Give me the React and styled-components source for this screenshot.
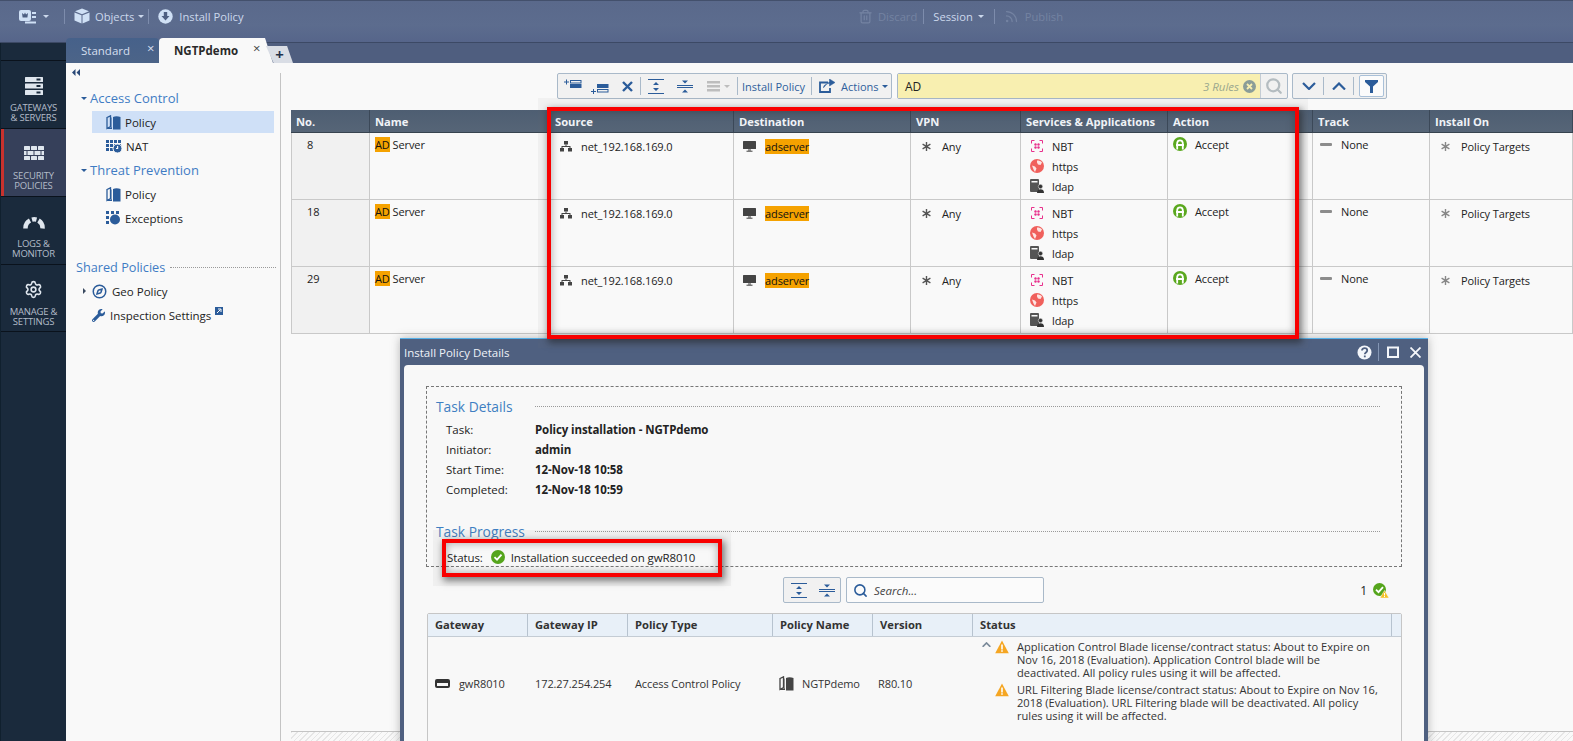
import styled, { createGlobalStyle } from "styled-components";
import { Compass, Rss, Settings, Search as SearchGlyph, Trash2 } from "lucide-react";
import { FaWrench } from "react-icons/fa";

const BLUE = "#2b5c9a";

const GlobalStyle = createGlobalStyle`
    html, body {
        margin: 0;
        height: 100%;
        overflow: hidden;
        background: #f9f9f9;
    }

    body {
        font-family: "Open Sans", "Liberation Sans", sans-serif;
        font-size: 11.5px;
        color: #222;
    }

    svg {
        display: block;
        flex-shrink: 0;
    }
`;

const Page = styled.div`
    position: relative;
    width: 1573px;
    height: 741px;
    overflow: hidden;
    display: flex;
    flex-direction: column;
`;

const TopBar = styled.header`
    flex: 0 0 43px;
    box-sizing: border-box;
    display: flex;
    align-items: flex-start;
    padding: 7px 0 0 19px;
    background: linear-gradient(#5a698b, #5c6c8e 60%, #56658a);
    border-top: 1px solid #43506c;
    border-bottom: 1px solid #3c4965;
`;

const BarGroup = styled.div`
    display: flex;
    align-items: center;
    height: 16px;
    width: ${props => props.$width ? `${props.$width}px` : "auto"};
`;

const BarText = styled.span`
    color: ${props => props.$dim ? "#7483a2" : "#cbd8ec"};
    font-size: 11.2px;
    margin-left: ${props => props.$left || 0}px;
    white-space: nowrap;
`;

const BarSep = styled.i`
    width: 1px;
    height: 15px;
    background: #7d8cac;
    margin: 0 9px 0 ${props => props.$gap ?? 9}px;
`;

const Caret = styled.i`
    width: 0;
    height: 0;
    border-left: 3px solid transparent;
    border-right: 3px solid transparent;
    border-top: 3px solid ${props => props.$color || "#cbd8ec"};
    margin-left: ${props => props.$left ?? 4}px;
`;

const SideCaret = styled.i`
    width: 0;
    height: 0;
    border-top: 3px solid transparent;
    border-bottom: 3px solid transparent;
    border-left: 3px solid #3a4a60;
    margin-right: 1px;
`;

const Shell = styled.div`
    flex: 1;
    display: flex;
    min-height: 0;
`;

const Sidebar = styled.nav`
    flex: 0 0 66px;
    box-sizing: border-box;
    padding-top: 17px;
    background: #1a2a3c;
    border-left: 1px solid #10202e;
`;

const NavItem = styled.div`
    box-sizing: border-box;
    height: 68px;
    padding-top: ${props => props.$pad}px;
    display: flex;
    flex-direction: column;
    align-items: center;
    border-top: 1px solid #0a121c;
    background: ${props => props.$active ? "#36405a" : "transparent"};
    box-shadow: ${props => props.$active ? "inset 3px 0 0 #c8322e" : "none"};

    &:last-child {
        border-bottom: 1px solid #0a121c;
    }
`;

const NavLabel = styled.div`
    margin-top: ${props => props.$gap}px;
    color: #b3bcc9;
    font-size: 9.5px;
    line-height: 10px;
    letter-spacing: -0.2px;
    text-align: center;
    white-space: nowrap;
`;

const Main = styled.div`
    flex: 1;
    min-width: 0;
    display: flex;
    flex-direction: column;
`;

const TabStrip = styled.div`
    flex: 0 0 20px;
    min-height: 0;
    height: 20px;
    display: flex;
    align-items: flex-end;
    background: #4f5e7f;
`;

const Tab = styled.div`
    flex: none;
    box-sizing: border-box;
    height: 25px;
    width: ${props => props.$active ? 114 : 93}px;
    padding-left: 15px;
    display: flex;
    align-items: center;
    border-radius: 4px 4px 0 0;
    color: ${props => props.$active ? "#2a2a2a" : "#d5dfee"};
    font-weight: ${props => props.$active ? 700 : 400};
    background: ${props => props.$active ? "#f9f9f9" : "linear-gradient(#46618a, #4c6488)"};
    clip-path: ${props => props.$active ? "polygon(0 0, 93% 0, 100% 100%, 0 100%)" : "none"};
`;

const TabClose = styled.span`
    margin-left: ${props => props.$left}px;
    margin-top: -6px;
    font-size: 13px;
    font-weight: 400;
    line-height: 12px;
    color: ${props => props.$active ? "#444" : "#d5dfee"};
`;

const NewTab = styled.div`
    flex: none;
    width: 27px;
    height: 17px;
    margin-left: -7px;
    display: flex;
    align-items: center;
    justify-content: center;
    background: #d9dde5;
    color: #22304a;
    font-size: 15px;
    font-weight: 700;
    line-height: 17px;
    clip-path: polygon(0 0, 78% 0, 100% 100%, 28% 100%);
`;

const Content = styled.div`
    flex: 1;
    min-height: 0;
    display: flex;
    background: #f9f9f9;
`;

const Tree = styled.aside`
    flex: 0 0 214px;
    box-sizing: border-box;
    padding: 5px 0 0 6px;
    display: flex;
    flex-direction: column;
`;

const CollapseMark = styled.div`
    flex: 0 0 18px;
    padding-top: 1px;
    box-sizing: border-box;
`;

const TreeHead = styled.div`
    flex: 0 0 24px;
    padding-left: 9px;
    display: flex;
    align-items: center;
    gap: 3px;
    color: #3f7cc4;
    font-size: 13px;
`;

const TreeItem = styled.div`
    flex: 0 0 22px;
    box-sizing: border-box;
    width: 182px;
    margin: 1px 0 1px 20px;
    padding-left: 14px;
    display: flex;
    align-items: center;
    gap: 4px;
    background: ${props => props.$selected ? "#cfe0f7" : "transparent"};
`;

const SharedHead = styled.div`
    flex: 0 0 24px;
    width: 200px;
    margin: 25px 0 0 4px;
    display: flex;
    align-items: center;
    gap: 5px;
    color: #3f7cc4;
    font-size: 12.7px;
    white-space: nowrap;

    &::after {
        content: "";
        flex: 1;
        border-top: 1px dotted #9a9a9a;
    }
`;

const SharedItem = styled.div`
    flex: 0 0 24px;
    padding-left: ${props => props.$left}px;
    display: flex;
    align-items: center;
    gap: 5px;
`;

const ExternalMark = styled.span`
    margin: -9px 0 0 -1px;
`;

const RuleArea = styled.section`
    flex: 1;
    min-width: 0;
    display: flex;
    flex-direction: column;
    margin-top: 10px;
    padding-left: 10px;
    border-left: 1px solid #c4c4c4;
`;

const RuleToolbar = styled.div`
    flex: 0 0 37px;
    display: flex;
    align-items: flex-start;
    padding-left: 266px;
`;

const ToolGroup = styled.div`
    flex: none;
    box-sizing: border-box;
    height: 26px;
    width: ${props => props.$width}px;
    margin-left: ${props => props.$left || 0}px;
    padding-left: ${props => props.$pad || 0}px;
    display: flex;
    align-items: center;
    border: 1px solid #a9b9c9;
    border-radius: 2px;
    background: #f1f1f1;
    color: #2f5f9c;
    font-size: 11px;
`;

const ToolSlot = styled.span`
    margin-left: ${props => props.$left || 0}px;
    padding-bottom: ${props => props.$low ? 3 : 0}px;
    align-self: ${props => props.$low ? "flex-end" : "auto"};
    display: flex;
    align-items: center;
    white-space: nowrap;
`;

const ToolSep = styled.i`
    width: 1px;
    height: 18px;
    background: #a9b9c9;
    margin-left: ${props => props.$left}px;
`;

const FilterButton = styled.span`
    box-sizing: border-box;
    width: 25px;
    height: 22px;
    margin-left: 5px;
    display: flex;
    align-items: center;
    justify-content: center;
    background: #fbfbfb;
    border: 1px solid #a9c0d8;
    border-radius: 2px;
`;

const SearchBox = styled.div`
    flex: none;
    box-sizing: border-box;
    width: 391px;
    height: 26px;
    margin-left: 5px;
    display: flex;
    border: 1px solid #a9b9c9;
    border-radius: 2px;
    background: #f1f1f1;
`;

const SearchInput = styled.div`
    flex: 1;
    padding: 0 4px 0 7px;
    display: flex;
    align-items: center;
    background: #f8efb0;
    font-size: 12px;
`;

const MatchCount = styled.span`
    margin-left: auto;
    margin-right: 4px;
    color: #9ba88e;
    font-size: 11.5px;
    font-style: italic;
`;

const SearchButton = styled.span`
    flex: 0 0 26px;
    display: flex;
    align-items: center;
    justify-content: center;
    border-left: 1px solid #c4ccd4;
`;

const RuleTable = styled.div`
    display: flex;
    flex-direction: column;
`;

const RuleGrid = styled.div`
    display: grid;
    grid-template-columns: 79px 180px 184px 177px 110px 147px 145px 117px 1fr;
`;

const RuleHead = styled(RuleGrid)`
    height: 23px;
    background: linear-gradient(#4e5e72, #566577);
    border-bottom: 1px solid #37434f;
    box-sizing: border-box;
`;

const RuleHeadCell = styled.div`
    padding: 1px 0 0 5px;
    border-right: 1px solid #3b4858;
    color: #f0f3f7;
    font-weight: 700;
    font-size: 11.2px;
    line-height: 21px;
`;

const RuleRow = styled(RuleGrid)`
    height: 67px;
    box-sizing: border-box;
    border-bottom: 1px solid #c9c9c9;
`;

const RuleCell = styled.div`
    padding: ${props => props.$top ?? 3}px 0 0 ${props => props.$left ?? 9}px;
    border-right: 1px solid #c9c9c9;
    background: ${props => props.$shade ? "#f1f1f1" : "transparent"};
    border-left: ${props => props.$shade ? "1px solid #c9c9c9" : "none"};
    font-size: 11px;
    letter-spacing: -0.1px;
`;

const CellItem = styled.div`
    height: 20px;
    display: flex;
    align-items: center;
    gap: 9px;
    white-space: nowrap;
`;

const IconBox = styled.span`
    width: 13px;
    display: flex;
    justify-content: center;
`;

const Mark = styled.span`
    background: #f5a200;
    color: #111;
    line-height: 15px;
    display: inline-block;
`;

const Hatch = styled.div`
    margin-top: auto;
    height: 9px;
    border-top: 1px solid #c4c4c4;
    background: repeating-linear-gradient(135deg, #e6e6e6 0 1px, #f9f9f9 1px 4px);
`;

const Dialog = styled.div`
    position: absolute;
    left: 400px;
    top: 338px;
    width: 1028px;
    height: 420px;
    box-sizing: border-box;
    padding: 0 4px;
    background: #4f6080;
    border-top: 1px solid #55b0e8;
    box-shadow: 0 0 9px rgba(60, 60, 60, 0.35);
`;

const DialogTitle = styled.div`
    height: 26px;
    display: flex;
    align-items: center;
    color: #eef2f8;
    font-size: 11.5px;
`;

const WindowButtons = styled.div`
    margin-left: auto;
    margin-right: 3px;
    display: flex;
    align-items: center;
`;

const WindowSep = styled.i`
    width: 1px;
    height: 18px;
    background: #8496b4;
    margin: 0 8px 0 6px;
`;

const CloseSlot = styled.span`
    margin-left: 11px;
`;

const DialogBody = styled.div`
    height: 100%;
    padding: 21px 22px 0;
    background: #f8f8f8;
    border-radius: 4px 4px 0 0;
`;

const TaskFrame = styled.div`
    box-sizing: border-box;
    height: 181px;
    padding-top: 8px;
    border: 1px dashed #777;
`;

const SectionTitle = styled.div`
    height: 22px;
    margin-top: ${props => props.$top || 0}px;
    padding: 0 21px 0 9px;
    display: grid;
    grid-template-columns: 99px 1fr;
    align-items: center;
    color: #3f7fc2;
    font-size: 13.8px;
    white-space: nowrap;

    &::after {
        content: "";
        border-top: 1px dotted #9a9a9a;
        margin-top: 1px;
    }
`;

const DetailRows = styled.dl`
    margin: 2px 0 0;
`;

const DetailRow = styled.div`
    height: 20px;
    padding-left: 19px;
    display: grid;
    grid-template-columns: 89px 1fr;
    align-items: center;

    & > dd {
        margin: 0;
        font-weight: 700;
        letter-spacing: -0.1px;
    }
`;

const StatusRow = styled.div`
    height: 20px;
    margin-top: 5px;
    padding-left: 20px;
    display: flex;
    align-items: center;
    letter-spacing: -0.1px;
`;

const ResultBar = styled.div`
    height: 26px;
    margin: 10px 0;
    display: flex;
    align-items: center;
`;

const FindBox = styled.div`
    box-sizing: border-box;
    width: 198px;
    height: 26px;
    margin-left: 5px;
    padding-left: 6px;
    display: flex;
    align-items: center;
    gap: 6px;
    background: #fbfbfb;
    border: 1px solid #a9b9c9;
    border-radius: 2px;
    color: #444;
    font-style: italic;
`;

const ResultCount = styled.div`
    margin-left: auto;
    margin-right: 13px;
    display: flex;
    align-items: center;
    gap: 6px;
    font-size: 12px;
`;

const ResultGrid = styled.div`
    display: grid;
    grid-template-columns: 100px 100px 145px 100px 100px 419px 1fr;
`;

const ResultTable = styled.div`
    height: 200px;
    margin-left: 1px;
    border: 1px solid #c6c6c6;
    border-radius: 2px 2px 0 0;
`;

const ResultHead = styled(ResultGrid)`
    height: 22px;
    background: #e8f0f8;
    border-bottom: 1px solid #c4ccd4;
`;

const ResultHeadCell = styled.div`
    padding-left: 7px;
    border-right: ${props => props.$last ? "none" : "1px solid #b7c3cf"};
    color: #333;
    font-weight: 700;
    font-size: 11.2px;
    line-height: 22px;
`;

const ResultRow = styled(ResultGrid)`
    height: 92px;
`;

const ResultCell = styled.div`
    padding-left: ${props => props.$left ?? 7}px;
    display: flex;
    align-items: center;
    gap: ${props => props.$gap ?? 9}px;
    color: #333;
    font-size: 11px;
    letter-spacing: -0.1px;
    white-space: nowrap;
`;

const StatusCell = styled.div`
    padding: 3px 0 0 9px;
    display: flex;
    flex-direction: column;
    gap: 4px;
    color: #333;
    font-size: 11.1px;
    line-height: 13px;
    white-space: nowrap;
`;

const MessageRow = styled.div`
    display: flex;
    align-items: flex-start;
`;

const MessageToggle = styled.span`
    width: 13px;
    padding-top: 2px;
`;

const MessageText = styled.div`
    margin-left: 8px;
`;

const Callout = styled.div`
    position: absolute;
    left: ${props => props.$left}px;
    top: ${props => props.$top}px;
    width: ${props => props.$width}px;
    height: ${props => props.$height}px;
    box-sizing: border-box;
    border: 4px solid #f80000;
    box-shadow: 2px 3px 7px 1px rgba(30, 30, 30, 0.55), 0 0 0 9px rgba(120, 120, 120, 0.06), inset 0 0 8px rgba(40, 40, 40, 0.4);
    pointer-events: none;
`;

const ProductIcon = () => (
    <svg width="18" height="15" viewBox="0 0 18 15">
        <rect x="0" y="1" width="12" height="11" rx="2" fill="#cfe0f5" />
        <path d="M3 4l2 1.500L6 3.500l1 2L9 4l-.6 4.500H3.600z" fill="#4d5f82" />
        <path d="M13 4h4M13 8h4M6 13.500h11" stroke="#cfe0f5" strokeWidth="2" />
    </svg>
);

const CubeIcon = () => (
    <svg width="16" height="16" viewBox="0 0 16 16">
        <path d="M8 0.500l7 2.800-7 2.900-7-2.900z" fill="#cfe0f5" />
        <path d="M.500 4.400l7 2.900v8.200l-7-3z" fill="#cfe0f5" />
        <path d="M15.500 4.400l-7 2.900v8.200l7-3z" fill="#cfe0f5" />
    </svg>
);

const InstallIcon = () => (
    <svg width="15" height="15" viewBox="0 0 15 15">
        <circle cx="7.500" cy="7.500" r="7.200" fill="#cfe0f5" />
        <path d="M5.800 3h3.400v4h2.300L7.500 11.600 3.500 7h2.300z" fill="#4d5f82" />
    </svg>
);

const GatewaysIcon = () => (
    <svg width="18" height="18" viewBox="0 0 18 18" fill="#dfe6ee">
        {[0, 6.500, 13].map(y => (
            <g key={y}>
                <rect x="0" y={y} width="18" height="5" rx="0.500" />
                <rect x="11.500" y={y + 1.500} width="4" height="2" fill="#1a2a3c" />
            </g>
        ))}
    </svg>
);

const WallIcon = () => (
    <svg width="20" height="15" viewBox="0 0 20 15" fill="#dfe6ee">
        {[0, 10].map(y => [0, 7, 14].map(x => (
            <rect key={`${x}-${y}`} x={x} y={y} width="6" height="4" rx="0.500" />
        )))}
        <rect x="0" y="5" width="2.500" height="4" />
        <rect x="3.500" y="5" width="6" height="4" />
        <rect x="10.500" y="5" width="6" height="4" />
        <rect x="17.500" y="5" width="2.500" height="4" />
    </svg>
);

const GaugeIcon = () => (
    <svg width="22" height="13" viewBox="0 0 22 13" fill="none" stroke="#dfe6ee" strokeWidth="4.500">
        <path d="M2.500 12.500A8.700 8.700 0 0 1 7 4.500" />
        <path d="M9 3.600a8.700 8.700 0 0 1 4.500 0" />
        <path d="M15.500 4.500a8.700 8.700 0 0 1 4 8" />
    </svg>
);

const PanelCollapseIcon = () => (
    <svg width="8" height="7" viewBox="0 0 8 7" fill="#2b4a78">
        <path d="M3.500 0v7L0 3.500zM8 0v7L4.500 3.500z" />
    </svg>
);

const BookIcon = ({ color = BLUE }) => (
    <svg width="15" height="15" viewBox="0 0 15 15">
        <path d="M1 2.500L4.500.800v10.700L1 13.500z" fill="none" stroke={color} strokeWidth="1.300" />
        <path d="M1 14h5V2.500H5.500V12.500H2z" fill={color} />
        <path d="M7 2c2-1 5-1 7.500 0v12.500H7z" fill={color} />
    </svg>
);

const NatIcon = () => (
    <svg width="16" height="13" viewBox="0 0 16 13" fill={BLUE}>
        {[0, 4, 8].map(y => [0, 4, 8, 12].map(x => (
            <rect key={`${x}-${y}`} x={x} y={y} width="3" height="3" />
        )))}
        <circle cx="11.500" cy="8.500" r="4.500" stroke="#f9f9f9" />
        <path d="M11 6h1.200v3H10V8h1z" fill="#f9f9f9" />
    </svg>
);

const ExceptionsIcon = () => (
    <svg width="15" height="14" viewBox="0 0 15 14" fill={BLUE}>
        <rect x="0" y="0" width="3" height="3" />
        <rect x="5" y="0" width="3" height="3" />
        <rect x="10" y="0" width="3" height="3" />
        <rect x="0" y="5" width="3" height="3" />
        <rect x="0" y="10" width="3" height="3" />
        <circle cx="9" cy="8.500" r="5" />
    </svg>
);

const ExternalIcon = () => (
    <svg width="8" height="8" viewBox="0 0 8 8">
        <rect width="8" height="8" fill={BLUE} />
        <path d="M2 6l3.500-3.500M3 2h3v3" stroke="#f9f9f9" fill="none" />
    </svg>
);

const AddAboveIcon = () => (
    <svg width="18" height="14" viewBox="0 0 18 14">
        <path d="M0 3h5M2.500.500v5" stroke={BLUE} />
        <rect x="6.500" y="1.500" width="10.500" height="2.500" fill="none" stroke={BLUE} />
        <rect x="6" y="5" width="11.500" height="4" fill={BLUE} />
    </svg>
);

const AddBelowIcon = () => (
    <svg width="18" height="11" viewBox="0 0 18 11">
        <rect x="6" y="0" width="11.500" height="4" fill={BLUE} />
        <rect x="6.500" y="5.500" width="10.500" height="2.500" fill="none" stroke={BLUE} />
        <path d="M0 7.500h5M2.500 5v5" stroke={BLUE} />
    </svg>
);

const CrossIcon = () => (
    <svg width="11" height="11" viewBox="0 0 11 11">
        <path d="M1 1l9 9M10 1l-9 9" stroke={BLUE} strokeWidth="2.400" />
    </svg>
);

const ExpandIcon = () => (
    <svg width="16" height="15" viewBox="0 0 16 15" fill={BLUE}>
        <rect y="0" width="16" height="1" />
        <rect y="14" width="16" height="1" />
        <path d="M8 3l3 3H5zM8 12l3-3H5z" />
    </svg>
);

const CollapseIcon = () => (
    <svg width="16" height="15" viewBox="0 0 16 15" fill={BLUE}>
        <rect y="6" width="16" height="1" />
        <rect y="8" width="16" height="1" />
        <path d="M8 4.500L5 1.500h6zM8 10.500l3 3H5z" />
    </svg>
);

const LinesIcon = () => (
    <svg width="13" height="11" viewBox="0 0 13 11" fill="#bdbdbd">
        <rect y="0" width="13" height="2.500" />
        <rect y="4" width="13" height="2.500" />
        <rect y="8" width="13" height="2.500" />
    </svg>
);

const ShareIcon = () => (
    <svg width="16" height="14" viewBox="0 0 16 14" fill="none" stroke={BLUE}>
        <path d="M9 3.500H1v9.500h10V9" strokeWidth="1.800" />
        <path d="M4.500 9c0-3 2.500-4.500 6-4.500V7L16 3.500 10.500 0v2.200" fill={BLUE} strokeWidth="0.500" />
    </svg>
);

const NetworkIcon = () => (
    <svg width="12" height="11" viewBox="0 0 12 11" fill="#444">
        <rect x="4" y="0" width="4" height="3.500" />
        <rect x="0" y="7" width="4" height="3.500" />
        <rect x="8" y="7" width="4" height="3.500" />
        <path d="M5.500 3.500h1V5H10.500v2h-1V6h-7v1h-1V5h4z" />
    </svg>
);

const MonitorIcon = () => (
    <svg width="13" height="11" viewBox="0 0 13 11" fill="#444">
        <rect width="13" height="8" rx="0.500" />
        <rect x="5" y="8.500" width="3" height="1" />
        <rect x="3.500" y="9.700" width="6" height="1" />
    </svg>
);

const StarIcon = ({ color = "#555" }) => (
    <svg width="9" height="9" viewBox="0 0 9 9" stroke={color} strokeWidth="1.400">
        <path d="M4.500 0v9M.600 2.200l7.800 4.600M8.400 2.200L.600 6.800" />
    </svg>
);

const NbtIcon = () => (
    <svg width="12" height="12" viewBox="0 0 12 12" fill="none" stroke="#e8308c">
        <path d="M3.500.500h-3v3M8.500.500h3v3M3.500 11.500h-3v-3M8.500 11.500h3v-3" />
        <g fill="#e8308c" stroke="none">
            <circle cx="4.500" cy="4.500" r="1.200" />
            <circle cx="7.500" cy="4.500" r="1.200" />
            <circle cx="4.500" cy="7.500" r="1.200" />
            <circle cx="7.500" cy="7.500" r="1.200" />
        </g>
    </svg>
);

const GlobeIcon = () => (
    <svg width="14" height="14" viewBox="0 0 14 14">
        <circle cx="7" cy="7" r="7" fill="#f0605c" />
        <path d="M7 1.500c2 0 4 .5 5 2L10.500 6 8 5.500 7 3.500zM2 6.500l3 1 1.500 2L5 13 3.500 10.500z" fill="#fde4e2" />
    </svg>
);

const LdapIcon = () => (
    <svg width="14" height="14" viewBox="0 0 14 14">
        <rect x="0" y="0" width="9" height="13" rx="1" fill="#555" />
        <rect x="1.500" y="2" width="6" height="1.500" fill="#f9f9f9" />
        <circle cx="10.500" cy="7.500" r="2.200" fill="#333" stroke="#f9f9f9" strokeWidth="0.500" />
        <path d="M7 14c0-3 1.500-3.800 3.500-3.800S14 11 14 14z" fill="#333" />
    </svg>
);

const AcceptIcon = () => (
    <svg width="14" height="14" viewBox="0 0 14 14">
        <circle cx="7" cy="7" r="7" fill="#5aa81e" />
        <path d="M4.200 12.500V5.500M9.800 12.500V5.500M4.200 6C4.600 2.500 9.400 2.500 9.800 6M3 8h8" fill="none" stroke="#fff" strokeWidth="1.800" />
    </svg>
);

const MinusIcon = () => (
    <svg width="12" height="3" viewBox="0 0 12 3">
        <rect width="12" height="3" rx="1" fill="#8c8c8c" />
    </svg>
);

const SuccessIcon = () => (
    <svg width="14" height="14" viewBox="0 0 14 14">
        <circle cx="7" cy="7" r="7" fill="#55a51c" />
        <path d="M3.500 7.200l2.500 2.500 4.500-5" fill="none" stroke="#fff" strokeWidth="1.800" />
    </svg>
);

const SuccessWarningIcon = () => (
    <svg width="16" height="15" viewBox="0 0 16 15">
        <circle cx="6.500" cy="6.500" r="6.500" fill="#55a51c" />
        <path d="M3 6.700l2.500 2.500 4.500-5" fill="none" stroke="#fff" strokeWidth="1.800" />
        <path d="M11.500 7.500l4.500 7.500H7z" fill="#f5c023" stroke="#f8f8f8" strokeWidth="0.500" />
        <path d="M11 10h1v2.500h-1zM11 13h1v1h-1z" fill="#fff" />
    </svg>
);

const WarningIcon = () => (
    <svg width="14" height="14" viewBox="0 0 14 14">
        <path d="M7 .500l6.800 12.800H.200z" fill="#f5a623" />
        <path d="M6.200 4.500h1.600v5H6.200zM6.200 10.300h1.600v1.500H6.200z" fill="#fff" />
    </svg>
);

const DeviceIcon = () => (
    <svg width="15" height="9" viewBox="0 0 15 9">
        <rect width="15" height="9" rx="2" fill="#333" />
        <rect x="2" y="4" width="11" height="3" fill="#f8f8f8" />
    </svg>
);

const ChevronIcon = ({ up, color = BLUE, size = 14, weight = 2.200 }) => (
    <svg width={size} height={size * 0.6} viewBox="0 0 14 8.400" fill="none" stroke={color} strokeWidth={weight}>
        <path d={up ? "M1 7.500L7 1.500l6 6" : "M1 1l6 6 6-6"} />
    </svg>
);

const FunnelIcon = () => (
    <svg width="13" height="13" viewBox="0 0 13 13">
        <path d="M0 0h13v2L8 6.500V13H5V6.500L0 2z" fill={BLUE} />
    </svg>
);

const ClearIcon = () => (
    <svg width="13" height="13" viewBox="0 0 13 13">
        <circle cx="6.500" cy="6.500" r="6.500" fill="#8b9d98" />
        <path d="M4 4l5 5M9 4l-5 5" stroke="#f8efb0" strokeWidth="1.800" />
    </svg>
);

const HelpIcon = () => (
    <svg width="15" height="15" viewBox="0 0 15 15">
        <circle cx="7.500" cy="7.500" r="7" fill="#f4f6fa" />
        <path d="M5 5.500c0-3.200 5.200-3 5.200 0 0 2-2.400 2-2.400 3.800" fill="none" stroke="#4f6080" strokeWidth="1.800" />
        <rect x="6.900" y="10.500" width="1.800" height="1.800" fill="#4f6080" />
    </svg>
);

const MaximizeIcon = () => (
    <svg width="12" height="12" viewBox="0 0 12 12">
        <rect x="1" y="1.500" width="10" height="9.500" fill="none" stroke="#f4f6fa" strokeWidth="2" />
    </svg>
);

const CloseIcon = () => (
    <svg width="11" height="11" viewBox="0 0 11 11">
        <path d="M.500.500l10 10M10.500.500l-10 10" stroke="#f4f6fa" strokeWidth="1.800" />
    </svg>
);

const columns = ["No.", "Name", "Source", "Destination", "VPN", "Services & Applications", "Action", "Track", "Install On"];
const ruleNumbers = [8, 18, 29];
const services = [
    { name: "NBT", icon: <NbtIcon /> },
    { name: "https", icon: <GlobeIcon /> },
    { name: "ldap", icon: <LdapIcon /> },
];
const details = [
    ["Task:", "Policy installation - NGTPdemo"],
    ["Initiator:", "admin"],
    ["Start Time:", "12-Nov-18 10:58"],
    ["Completed:", "12-Nov-18 10:59"],
];
const resultColumns = ["Gateway", "Gateway IP", "Policy Type", "Policy Name", "Version", "Status", ""];

const App = () => {
    return (
        <Page>
            <GlobalStyle />
            <TopBar>
                <BarGroup $width={839}>
                    <ProductIcon />
                    <Caret $left={6} />
                    <BarSep $gap={15} />
                    <CubeIcon />
                    <BarText $left={5}>Objects</BarText>
                    <Caret />
                    <BarSep $gap={4} />
                    <InstallIcon />
                    <BarText $left={6}>Install Policy</BarText>
                </BarGroup>
                <BarGroup>
                    <Trash2 size={15} color="#7483a2" />
                    <BarText $dim $left={5}>Discard</BarText>
                    <BarSep $gap={6} />
                    <BarText>Session</BarText>
                    <Caret $left={5} />
                    <BarSep $gap={10} />
                    <Rss size={15} color="#7483a2" />
                    <BarText $dim $left={6}>Publish</BarText>
                </BarGroup>
            </TopBar>
            <Shell>
                <Sidebar>
                    <NavItem $pad={16}>
                        <GatewaysIcon />
                        <NavLabel $gap={8}>GATEWAYS<br />&amp; SERVERS</NavLabel>
                    </NavItem>
                    <NavItem $active $pad={17}>
                        <WallIcon />
                        <NavLabel $gap={10}>SECURITY<br />POLICIES</NavLabel>
                    </NavItem>
                    <NavItem $pad={19}>
                        <GaugeIcon />
                        <NavLabel $gap={10}>LOGS &amp;<br />MONITOR</NavLabel>
                    </NavItem>
                    <NavItem $pad={15}>
                        <Settings size={19} color="#dfe6ee" />
                        <NavLabel $gap={8}>MANAGE &amp;<br />SETTINGS</NavLabel>
                    </NavItem>
                </Sidebar>
                <Main>
                    <TabStrip>
                        <Tab>Standard<TabClose $left={17}>×</TabClose></Tab>
                        <Tab $active>NGTPdemo<TabClose $active $left={15}>×</TabClose></Tab>
                        <NewTab>+</NewTab>
                    </TabStrip>
                    <Content>
                        <Tree>
                            <CollapseMark><PanelCollapseIcon /></CollapseMark>
                            <TreeHead><Caret $left={0} $color={BLUE} />Access Control</TreeHead>
                            <TreeItem $selected><BookIcon />Policy</TreeItem>
                            <TreeItem><NatIcon />NAT</TreeItem>
                            <TreeHead><Caret $left={0} $color={BLUE} />Threat Prevention</TreeHead>
                            <TreeItem><BookIcon />Policy</TreeItem>
                            <TreeItem><ExceptionsIcon />Exceptions</TreeItem>
                            <SharedHead>Shared Policies</SharedHead>
                            <SharedItem $left={11}>
                                <SideCaret />
                                <Compass size={15} color={BLUE} strokeWidth={2.400} />
                                Geo Policy
                            </SharedItem>
                            <SharedItem $left={20}>
                                <FaWrench size={13} color={BLUE} />
                                Inspection Settings
                                <ExternalMark><ExternalIcon /></ExternalMark>
                            </SharedItem>
                        </Tree>
                        <RuleArea>
                            <RuleToolbar>
                                <ToolGroup $width={335} $pad={6}>
                                    <ToolSlot><AddAboveIcon /></ToolSlot>
                                    <ToolSlot $left={9} $low><AddBelowIcon /></ToolSlot>
                                    <ToolSlot $left={13}><CrossIcon /></ToolSlot>
                                    <ToolSep $left={7} />
                                    <ToolSlot $left={7}><ExpandIcon /></ToolSlot>
                                    <ToolSlot $left={13}><CollapseIcon /></ToolSlot>
                                    <ToolSlot $left={14}><LinesIcon /></ToolSlot>
                                    <Caret $left={4} $color="#bdbdbd" />
                                    <ToolSep $left={7} />
                                    <ToolSlot $left={4}>Install Policy</ToolSlot>
                                    <ToolSep $left={6} />
                                    <ToolSlot $left={7}><ShareIcon /></ToolSlot>
                                    <ToolSlot $left={6}>Actions</ToolSlot>
                                    <Caret $left={3} $color={BLUE} />
                                </ToolGroup>
                                <SearchBox>
                                    <SearchInput>
                                        AD
                                        <MatchCount>3 Rules</MatchCount>
                                        <ClearIcon />
                                    </SearchInput>
                                    <SearchButton><SearchGlyph size={18} color="#b4bcc0" strokeWidth={3} /></SearchButton>
                                </SearchBox>
                                <ToolGroup $width={95} $left={4} $pad={9}>
                                    <ToolSlot><ChevronIcon /></ToolSlot>
                                    <ToolSep $left={7} />
                                    <ToolSlot $left={8}><ChevronIcon up /></ToolSlot>
                                    <ToolSep $left={7} />
                                    <FilterButton><FunnelIcon /></FilterButton>
                                </ToolGroup>
                            </RuleToolbar>
                            <RuleTable>
                                <RuleHead>
                                    {columns.map(name => <RuleHeadCell key={name}>{name}</RuleHeadCell>)}
                                </RuleHead>
                                {ruleNumbers.map(no => (
                                    <RuleRow key={no}>
                                        <RuleCell $shade $left={15} $top={1}>
                                            <CellItem>{no}</CellItem>
                                        </RuleCell>
                                        <RuleCell $left={5} $top={1}>
                                            <CellItem><span><Mark>AD</Mark> Server</span></CellItem>
                                        </RuleCell>
                                        <RuleCell>
                                            <CellItem><IconBox><NetworkIcon /></IconBox>net_192.168.169.0</CellItem>
                                        </RuleCell>
                                        <RuleCell>
                                            <CellItem><IconBox><MonitorIcon /></IconBox><Mark>adserver</Mark></CellItem>
                                        </RuleCell>
                                        <RuleCell>
                                            <CellItem><IconBox><StarIcon /></IconBox>Any</CellItem>
                                        </RuleCell>
                                        <RuleCell>
                                            {services.map(service => (
                                                <CellItem key={service.name}>
                                                    <IconBox>{service.icon}</IconBox>
                                                    {service.name}
                                                </CellItem>
                                            ))}
                                        </RuleCell>
                                        <RuleCell $left={5} $top={1}>
                                            <CellItem><IconBox><AcceptIcon /></IconBox>Accept</CellItem>
                                        </RuleCell>
                                        <RuleCell $left={6} $top={1}>
                                            <CellItem><IconBox><MinusIcon /></IconBox>None</CellItem>
                                        </RuleCell>
                                        <RuleCell>
                                            <CellItem><IconBox><StarIcon color="#888" /></IconBox>Policy Targets</CellItem>
                                        </RuleCell>
                                    </RuleRow>
                                ))}
                            </RuleTable>
                            <Hatch />
                        </RuleArea>
                    </Content>
                </Main>
            </Shell>
            <Dialog>
                <DialogTitle>
                    Install Policy Details
                    <WindowButtons>
                        <HelpIcon />
                        <WindowSep />
                        <MaximizeIcon />
                        <CloseSlot><CloseIcon /></CloseSlot>
                    </WindowButtons>
                </DialogTitle>
                <DialogBody>
                    <TaskFrame>
                        <SectionTitle>Task Details</SectionTitle>
                        <DetailRows>
                            {details.map(([label, value]) => (
                                <DetailRow key={label}>
                                    <dt>{label}</dt>
                                    <dd>{value}</dd>
                                </DetailRow>
                            ))}
                        </DetailRows>
                        <SectionTitle $top={21}>Task Progress</SectionTitle>
                        <StatusRow>
                            Status:
                            <ToolSlot $left={8}><SuccessIcon /></ToolSlot>
                            <ToolSlot $left={6}>Installation succeeded on gwR8010</ToolSlot>
                        </StatusRow>
                    </TaskFrame>
                    <ResultBar>
                        <ToolGroup $width={58} $left={357} $pad={7}>
                            <ToolSlot><ExpandIcon /></ToolSlot>
                            <ToolSlot $left={12}><CollapseIcon /></ToolSlot>
                        </ToolGroup>
                        <FindBox>
                            <SearchGlyph size={15} color={BLUE} strokeWidth={2.500} />
                            Search...
                        </FindBox>
                        <ResultCount>
                            1
                            <SuccessWarningIcon />
                        </ResultCount>
                    </ResultBar>
                    <ResultTable>
                        <ResultHead>
                            {resultColumns.map((name, i) => (
                                <ResultHeadCell key={i} $last={i === resultColumns.length - 1}>{name}</ResultHeadCell>
                            ))}
                        </ResultHead>
                        <ResultRow>
                            <ResultCell><DeviceIcon />gwR8010</ResultCell>
                            <ResultCell>172.27.254.254</ResultCell>
                            <ResultCell>Access Control Policy</ResultCell>
                            <ResultCell $left={6} $gap={8}><BookIcon color="#444" />NGTPdemo</ResultCell>
                            <ResultCell $left={5}>R80.10</ResultCell>
                            <StatusCell>
                                <MessageRow>
                                    <MessageToggle><ChevronIcon up color="#7a8a9a" size={9} weight={2.600} /></MessageToggle>
                                    <WarningIcon />
                                    <MessageText>
                                        Application Control Blade license/contract status: About to Expire on<br />
                                        Nov 16, 2018 (Evaluation). Application Control blade will be<br />
                                        deactivated. All policy rules using it will be affected.
                                    </MessageText>
                                </MessageRow>
                                <MessageRow>
                                    <MessageToggle />
                                    <WarningIcon />
                                    <MessageText>
                                        URL Filtering Blade license/contract status: About to Expire on Nov 16,<br />
                                        2018 (Evaluation). URL Filtering blade will be deactivated. All policy<br />
                                        rules using it will be affected.
                                    </MessageText>
                                </MessageRow>
                            </StatusCell>
                        </ResultRow>
                    </ResultTable>
                </DialogBody>
            </Dialog>
            <Callout $left={547} $top={107} $width={752} $height={232} />
            <Callout $left={442} $top={539} $width={280} $height={38} />
        </Page>
    );
}

export default App;
